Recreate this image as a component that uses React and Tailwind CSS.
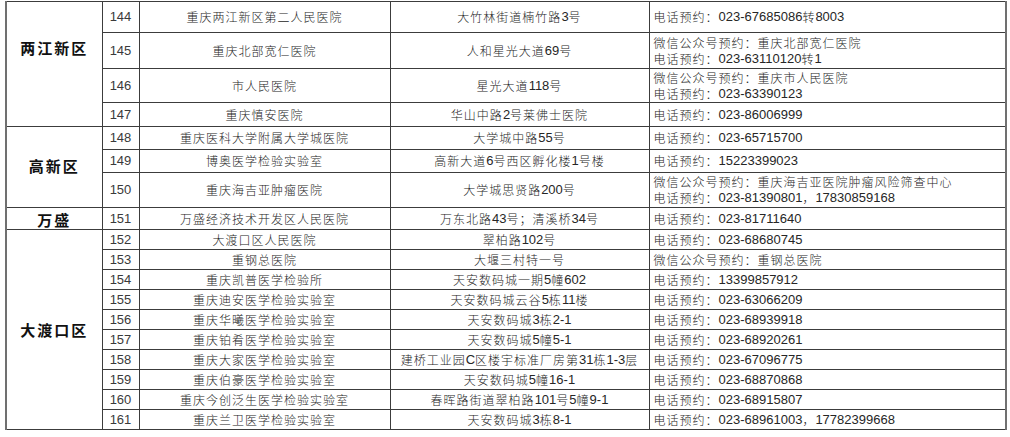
import React from "react";

const rows = [
  { n: "144", name: "重庆两江新区第二人民医院", addr: "大竹林街道楠竹路3号", c: ["电话预约：023-67685086转8003"], h: "h-[31px]" },
  { n: "145", name: "重庆北部宽仁医院", addr: "人和星光大道69号", c: ["微信公众号预约：重庆北部宽仁医院", "电话预约：023-63110120转1"], h: "h-[36px]" },
  { n: "146", name: "市人民医院", addr: "星光大道118号", c: ["微信公众号预约：重庆市人民医院", "电话预约：023-63390123"], h: "h-[34px]" },
  { n: "147", name: "重庆慎安医院", addr: "华山中路2号莱佛士医院", c: ["电话预约：023-86006999"], h: "h-[24px]" },
  { n: "148", name: "重庆医科大学附属大学城医院", addr: "大学城中路55号", c: ["电话预约：023-65715700"], h: "h-[23px]" },
  { n: "149", name: "博奥医学检验实验室", addr: "高新大道6号西区孵化楼1号楼", c: ["电话预约：15223399023"], h: "h-[23px]" },
  { n: "150", name: "重庆海吉亚肿瘤医院", addr: "大学城思贤路200号", c: ["微信公众号预约：重庆海吉亚医院肿瘤风险筛查中心", "电话预约：023-81390801，17830859168"], h: "h-[35px]" },
  { n: "151", name: "万盛经济技术开发区人民医院", addr: "万东北路43号；清溪桥34号", c: ["电话预约：023-81711640"], h: "h-[22px]" },
  { n: "152", name: "大渡口区人民医院", addr: "翠柏路102号", c: ["电话预约：023-68680745"], h: "h-[20px]" },
  { n: "153", name: "重钢总医院", addr: "大堰三村特一号", c: ["微信公众号预约：重钢总医院"], h: "h-[20px]" },
  { n: "154", name: "重庆凯普医学检验所", addr: "天安数码城一期5幢602", c: ["电话预约：13399857912"], h: "h-[20px]" },
  { n: "155", name: "重庆迪安医学检验实验室", addr: "天安数码城云谷5栋11楼", c: ["电话预约：023-63066209"], h: "h-[20px]" },
  { n: "156", name: "重庆华曦医学检验实验室", addr: "天安数码城3栋2-1", c: ["电话预约：023-68939918"], h: "h-[20px]" },
  { n: "157", name: "重庆铂肴医学检验实验室", addr: "天安数码城5幢5-1", c: ["电话预约：023-68920261"], h: "h-[20px]" },
  { n: "158", name: "重庆大家医学检验实验室", addr: "建桥工业园C区楼宇标准厂房第31栋1-3层", c: ["电话预约：023-67096775"], h: "h-[20px]" },
  { n: "159", name: "重庆伯豪医学检验实验室", addr: "天安数码城5幢16-1", c: ["电话预约：023-68870868"], h: "h-[20px]" },
  { n: "160", name: "重庆今创泛生医学检验实验室", addr: "春晖路街道翠柏路101号5幢9-1", c: ["电话预约：023-68915807"], h: "h-[20px]" },
  { n: "161", name: "重庆兰卫医学检验实验室", addr: "天安数码城3栋8-1", c: ["电话预约：023-68961003，17782399668"], h: "h-[20px]" },
];

const districts = {
  0: { name: "两江新区", span: 4, pad: "pb-[32px]" },
  4: { name: "高新区", span: 3, pad: "pb-[2px]" },
  7: { name: "万盛", span: 1, pad: "pt-[2px]" },
  8: { name: "大渡口区", span: 10, pad: "pb-0" },
};

function Mixed({ text }) {
  const parts = text.split(/([\u0000-\u00ff]+)/).filter((p) => p.length);
  return (
    <>
      {parts.map((p, i) =>
        /^[\u0000-\u00ff]+$/.test(p) ? (
          <span key={i} className="font-['Liberation_Sans',sans-serif] text-[13px] leading-[16px]">
            {p}
          </span>
        ) : (
          <span key={i} className="text-[12px] tracking-[1px] leading-[16px] font-light">
            {p}
          </span>
        )
      )}
    </>
  );
}

function Line({ text, left }) {
  return (
    <div className={`h-[16px] flex items-center whitespace-nowrap ${left ? "justify-start" : "justify-center"}`}>
      <Mixed text={text} />
    </div>
  );
}

const cell = "border border-[#3c3c3c] p-0 align-middle leading-[16px] text-[12px] overflow-hidden whitespace-nowrap";

export default function App() {
  return (
    <div className="w-[1010px] h-[437px] bg-white overflow-hidden pt-px pl-[5px] font-['Noto_Sans_CJK_SC',sans-serif] text-[#262626]">
      <table className="table-fixed border-collapse w-[1000px]">
        <colgroup>
          <col className="w-[96px]" />
          <col className="w-[37px]" />
          <col className="w-[251px]" />
          <col className="w-[259px]" />
          <col className="w-[357px]" />
        </colgroup>
        <tbody>
          {rows.map((r, i) => (
            <tr key={r.n} className={r.h}>
              {districts[i] && (
                <td
                  rowSpan={districts[i].span}
                  className={`${cell} border-l-2 border-l-[#707070] text-center ${districts[i].pad}`}
                >
                  <span className="text-[15px] font-bold tracking-[2px] text-[#111] leading-[18px]">
                    {districts[i].name}
                  </span>
                </td>
              )}
              <td className={`${cell} text-[#3a3a3a]`}>
                <Line text={r.n} />
              </td>
              <td className={cell}>
                <Line text={r.name} />
              </td>
              <td className={cell}>
                <Line text={r.addr} />
              </td>
              <td className={`${cell} border-r-2 border-r-[#707070] pl-[4px]`}>
                {r.c.map((line, j) => (
                  <Line key={j} text={line} left />
                ))}
              </td>
            </tr>
          ))}
        </tbody>
      </table>
    </div>
  );
}
